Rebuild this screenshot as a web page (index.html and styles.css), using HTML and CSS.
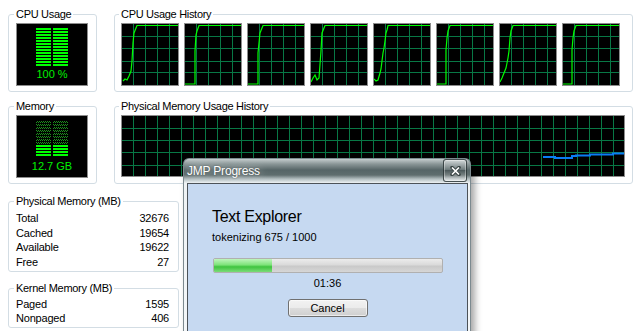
FILE: index.html
```html
<html>
<head>
    <meta charset="UTF-8">
    <title>Performance</title>
    <link rel="stylesheet" href="styles.css">
</head>
<body>
    <div class="panel">
        <div class="row">
            <fieldset class="group meter-group">
                <legend>CPU Usage</legend>
                <div class="meter">
                    <div class="bars">
                        <span class="col"><span class="lit cpu"></span></span>
                        <span class="col"><span class="lit cpu"></span></span>
                    </div>
                    <div class="meter-value">100 %</div>
                </div>
            </fieldset>
            <fieldset class="group history">
                <legend>CPU Usage History</legend>
                <div class="graphs">
                    <svg class="graph" viewBox="0 0 56 61"><path class="grid" d="M11.5 0V61M23.5 0V61M35.5 0V61M47.5 0V61M0 12.5H56M0 24.5H56M0 37.5H56M0 48.5H56"/><polyline class="cpu-line" points="1,57 3,55 5,56 7,52 9,47 10,37 11,19 12,9 14,4 15,1.5 56,1.5"/></svg>
                    <svg class="graph" viewBox="0 0 56 61"><path class="grid" d="M11.5 0V61M23.5 0V61M35.5 0V61M47.5 0V61M0 12.5H56M0 24.5H56M0 37.5H56M0 48.5H56"/><polyline class="cpu-line" points="0,60 10,60 10,27 11,11 12,7 14,1.5 56,1.5"/></svg>
                    <svg class="graph" viewBox="0 0 56 61"><path class="grid" d="M11.5 0V61M23.5 0V61M35.5 0V61M47.5 0V61M0 12.5H56M0 24.5H56M0 37.5H56M0 48.5H56"/><polyline class="cpu-line" points="0,60 10,60 10,29 11,19 12,9 14,4 15,1.5 56,1.5"/></svg>
                    <svg class="graph" viewBox="0 0 56 61"><path class="grid" d="M11.5 0V61M23.5 0V61M35.5 0V61M47.5 0V61M0 12.5H56M0 24.5H56M0 37.5H56M0 48.5H56"/><polyline class="cpu-line" points="0,58 2,54 4,51 6,56 8,54 10,27 11,9 13,4 14,1.5 56,1.5"/></svg>
                    <svg class="graph" viewBox="0 0 56 61"><path class="grid" d="M11.5 0V61M23.5 0V61M35.5 0V61M47.5 0V61M0 12.5H56M0 24.5H56M0 37.5H56M0 48.5H56"/><polyline class="cpu-line" points="0,55 2,57 4,56 6,49 7,45 8,37 9,29 10,24 11,17 12,9 13,6 14,1.5 56,1.5"/></svg>
                    <svg class="graph" viewBox="0 0 56 61"><path class="grid" d="M11.5 0V61M23.5 0V61M35.5 0V61M47.5 0V61M0 12.5H56M0 24.5H56M0 37.5H56M0 48.5H56"/><polyline class="cpu-line" points="0,60 9,60 9,26 10,14 11,7 13,1.5 56,1.5"/></svg>
                    <svg class="graph" viewBox="0 0 56 61"><path class="grid" d="M11.5 0V61M23.5 0V61M35.5 0V61M47.5 0V61M0 12.5H56M0 24.5H56M0 37.5H56M0 48.5H56"/><polyline class="cpu-line" points="0,58 2,54 4,49 6,44 7,39 8,34 9,27 10,14 11,7 13,1.5 56,1.5"/></svg>
                    <svg class="graph" viewBox="0 0 56 61"><path class="grid" d="M11.5 0V61M23.5 0V61M35.5 0V61M47.5 0V61M0 12.5H56M0 24.5H56M0 37.5H56M0 48.5H56"/><polyline class="cpu-line" points="0,60 9,60 9,26 10,14 11,7 13,1.5 56,1.5"/></svg>
                </div>
            </fieldset>
        </div>

        <div class="row">
            <fieldset class="group meter-group">
                <legend>Memory</legend>
                <div class="meter mem">
                    <div class="bars">
                        <span class="col"><span class="dim"></span><span class="lit"></span></span>
                        <span class="col"><span class="dim"></span><span class="lit"></span></span>
                    </div>
                    <div class="meter-value">12.7 GB</div>
                </div>
            </fieldset>
            <fieldset class="group history">
                <legend>Physical Memory Usage History</legend>
                <svg class="mem-graph" viewBox="0 0 502 60">
                    <defs>
                        <pattern id="vlines" width="12" height="60" patternUnits="userSpaceOnUse">
                            <path class="grid" d="M11.5 0V60"/>
                        </pattern>
                    </defs>
                    <rect width="502" height="60" fill="url(#vlines)"/>
                    <path class="grid" d="M0 12.5H502M0 24.5H502M0 36.5H502M0 49.5H502"/>
                    <polyline class="mem-line" points="421,41 433,41 433,42 450,42 450,40 454,40 454,39.5 468,39.5 468,38.5 491,38.5 491,37.5 502,37.5"/>
                </svg>
            </fieldset>
        </div>

        <div class="stats">
            <fieldset class="group stat-group">
                <legend>Physical Memory (MB)</legend>
                <div class="stat-row"><span>Total</span><span>32676</span></div>
                <div class="stat-row"><span>Cached</span><span>19654</span></div>
                <div class="stat-row"><span>Available</span><span>19622</span></div>
                <div class="stat-row"><span>Free</span><span>27</span></div>
            </fieldset>
            <fieldset class="group stat-group">
                <legend>Kernel Memory (MB)</legend>
                <div class="stat-row"><span>Paged</span><span>1595</span></div>
                <div class="stat-row"><span>Nonpaged</span><span>406</span></div>
            </fieldset>
        </div>
    </div>

    <div class="dialog">
        <div class="titlebar">
            <span class="title">JMP Progress</span>
            <span class="close">
                <svg width="11" height="10" viewBox="0 0 11 10">
                    <path d="M2 1.5L9 8.5M9 1.5L2 8.5" stroke="#3a4545" stroke-width="3.5" stroke-linecap="round"/>
                    <path d="M2 1.5L9 8.5M9 1.5L2 8.5" stroke="#fff" stroke-width="1.7"/>
                </svg>
            </span>
        </div>
        <div class="client">
            <div class="heading">
                <div class="task">Text Explorer</div>
                <div class="status">tokenizing 675 / 1000</div>
            </div>
            <div class="progress"><div class="fill" style="width: 58px"></div></div>
            <div class="elapsed">01:36</div>
            <button class="cancel">Cancel</button>
        </div>
    </div>
</body>
</html>
```

FILE: styles.css
```css
html, body {
    margin: 0;
    height: 100%;
    overflow: hidden;
}

body {
    background: #fff;
    font-family: "Liberation Sans", Arial, sans-serif;
    font-size: 11px;
    color: #000;
}

.panel {
    padding: 8px 3px 0 8px;
}

.row {
    display: flex;
    gap: 17px;
}

.row + .row {
    margin-top: 8px;
}

.group {
    margin: 0;
    min-width: 0;
    border: 1px solid #d3dde4;
    border-radius: 3px;
    padding: 2px 8px 5px 7px;
}

.group legend {
    padding: 0 2px;
    margin-left: -2px;
    line-height: 13px;
    letter-spacing: -0.3px;
}

.history {
    flex: 1;
    padding-left: 6px;
}

/* green bar meters */
.meter {
    box-sizing: border-box;
    width: 72px;
    height: 63px;
    border: 1px solid #8c8c8c;
    background: #000;
    display: flex;
    flex-direction: column;
    align-items: center;
    padding-top: 4px;
}

.meter.mem {
    padding-top: 5px;
}

.bars {
    display: flex;
    gap: 2px;
}

.col {
    display: flex;
    flex-direction: column;
    width: 15px;
}

.lit {
    height: 12px;
    background: repeating-linear-gradient(to bottom, #00ff00 0 2px, transparent 2px 3px);
}

.lit.cpu {
    height: 38px;
}

.dim {
    height: 24px;
    background:
        repeating-linear-gradient(to bottom, transparent 0 2px, #000 2px 3px),
        repeating-conic-gradient(#1c8f1c 0 25%, #000 0 50%) 0 0 / 2px 2px;
}

.meter-value {
    margin-top: 2px;
    line-height: 13px;
    color: #00f000;
}

.mem .meter-value {
    margin-top: 3px;
}

/* history graphs */
.graphs {
    display: flex;
    gap: 5px;
}

.graph {
    display: block;
    width: 56px;
    height: 61px;
    border: 1px solid #8c8c8c;
    background: #000;
}

.mem-graph {
    display: block;
    width: 502px;
    height: 60px;
    border: 1px solid #8c8c8c;
    background: #000;
}

.grid {
    fill: none;
    stroke: #087845;
    stroke-width: 1;
}

.cpu-line {
    fill: none;
    stroke: #00ff00;
    stroke-width: 1.2;
}

.mem-line {
    fill: none;
    stroke: #0a7cf5;
    stroke-width: 2;
}

/* memory numbers */
.stats {
    display: flex;
    flex-direction: column;
    gap: 10px;
    width: 171px;
    margin-top: 11px;
}

.stat-group {
    padding: 3px 9px 1px 7px;
}

.stat-group + .stat-group {
    padding-top: 2px;
}

.stat-row {
    display: flex;
    justify-content: space-between;
    line-height: 14.67px;
    letter-spacing: -0.2px;
}

/* progress window */
.dialog {
    position: absolute;
    left: 183px;
    top: 158px;
    width: 288px;
    height: 190px;
    box-sizing: border-box;
    border: 1px solid #7c8a90;
    border-bottom: none;
    border-radius: 6px 6px 0 0;
    padding: 0 2px 0 3px;
    background: linear-gradient(to bottom, #c4cccd 0px, #8a9697 5px, #566567 11px, #5f6d6e 16px, #b4bfc1 20px, #eef2f4 24px, #f4f7f9 100%);
    box-shadow: 4px 1px 7px rgba(0, 0, 0, 0.35);
}

.titlebar {
    display: flex;
    height: 24px;
}

.title {
    align-self: center;
    color: #fff;
    font-size: 12px;
    letter-spacing: -0.2px;
    text-shadow: 0 0 2px rgba(60, 70, 70, 0.9), 0 0 9px rgba(225, 232, 232, 0.9);
}

.close {
    margin-left: auto;
    margin-right: 1px;
    box-sizing: border-box;
    width: 24px;
    height: 23px;
    border: 1px solid rgba(40, 50, 52, 0.85);
    border-radius: 3px;
    background: linear-gradient(to bottom, rgba(255, 255, 255, 0.35), rgba(255, 255, 255, 0.1) 50%, rgba(0, 0, 0, 0.12) 50%, rgba(255, 255, 255, 0.45));
    box-shadow: inset 0 0 0 1px rgba(255, 255, 255, 0.35);
    display: flex;
    align-items: center;
    justify-content: center;
}

.close svg {
    display: block;
}

.client {
    height: 200px;
    background: #c6d9f1;
    border: 1px solid #4c5258;
}

.heading {
    padding: 23px 0 0 24px;
}

.task {
    font-size: 16px;
    line-height: 20px;
    letter-spacing: -0.3px;
}

.status {
    margin-top: 4px;
    line-height: 13px;
}

.progress {
    box-sizing: border-box;
    width: 230px;
    height: 15px;
    margin: 14px auto 0;
    border: 1px solid #b0b0b0;
    border-radius: 2px;
    background: linear-gradient(to bottom, #ececec, #dadada 45%, #c9c9c9 55%, #d6d6d6);
    overflow: hidden;
}

.fill {
    height: 100%;
    background: linear-gradient(to bottom, #bff5bc, #7ee37a 45%, #3fc43f 60%, #7bdc78);
}

.elapsed {
    margin-top: 4px;
    line-height: 13px;
    text-align: center;
}

.cancel {
    display: block;
    width: 80px;
    height: 18px;
    margin: 9px auto 0;
    padding: 0;
    font-family: "Liberation Sans", Arial, sans-serif;
    font-size: 11px;
    color: #000;
    border: 1px solid #707070;
    border-radius: 3px;
    background: linear-gradient(to bottom, #f2f2f2, #ebebeb 50%, #dddddd 50%, #cfcfcf);
    box-shadow: inset 0 0 0 1px rgba(255, 255, 255, 0.6);
}
```
